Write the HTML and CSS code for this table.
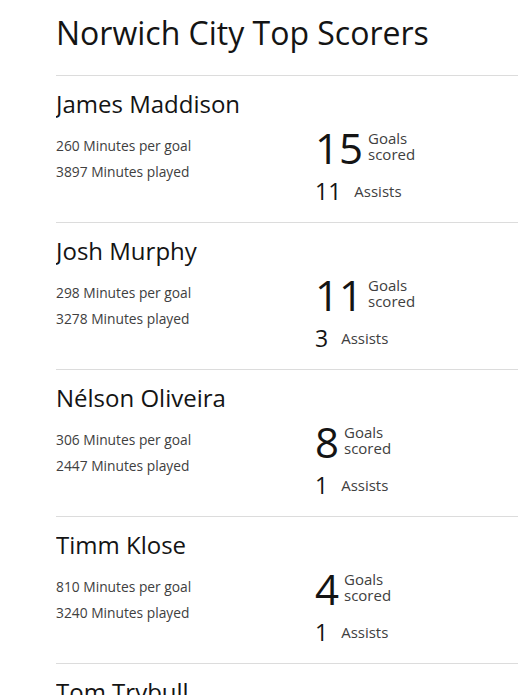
FILE: index.html
```html
<!DOCTYPE html>
<html lang="en">
<head>
    <meta charset="UTF-8">
    <meta name="viewport" content="width=device-width, initial-scale=1.0">
    <title>Norwich City Top Scorers</title>
    <link rel="stylesheet" href="styles.css">
</head>
<body>

<div class="container">
    <h1>Norwich City Top Scorers</h1>

    <div class="player">
        <h2>James Maddison</h2>
        <div class="player-body">
            <div class="minutes">
                <p>260 Minutes per goal</p>
                <p>3897 Minutes played</p>
            </div>
            <div class="totals">
                <div class="goals"><span class="big">15</span><span class="label">Goals<br>scored</span></div>
                <div class="assists"><span class="mid">11</span><span class="label">Assists</span></div>
            </div>
        </div>
    </div>

    <div class="player">
        <h2>Josh Murphy</h2>
        <div class="player-body">
            <div class="minutes">
                <p>298 Minutes per goal</p>
                <p>3278 Minutes played</p>
            </div>
            <div class="totals">
                <div class="goals"><span class="big">11</span><span class="label">Goals<br>scored</span></div>
                <div class="assists"><span class="mid">3</span><span class="label">Assists</span></div>
            </div>
        </div>
    </div>

    <div class="player">
        <h2>Nélson Oliveira</h2>
        <div class="player-body">
            <div class="minutes">
                <p>306 Minutes per goal</p>
                <p>2447 Minutes played</p>
            </div>
            <div class="totals">
                <div class="goals"><span class="big">8</span><span class="label">Goals<br>scored</span></div>
                <div class="assists"><span class="mid">1</span><span class="label">Assists</span></div>
            </div>
        </div>
    </div>

    <div class="player">
        <h2>Timm Klose</h2>
        <div class="player-body">
            <div class="minutes">
                <p>810 Minutes per goal</p>
                <p>3240 Minutes played</p>
            </div>
            <div class="totals">
                <div class="goals"><span class="big">4</span><span class="label">Goals<br>scored</span></div>
                <div class="assists"><span class="mid">1</span><span class="label">Assists</span></div>
            </div>
        </div>
    </div>

    <div class="player">
        <h2>Tom Trybull</h2>
        <div class="player-body">
            <div class="minutes">
                <p>540 Minutes per goal</p>
                <p>2160 Minutes played</p>
            </div>
            <div class="totals">
                <div class="goals"><span class="big">4</span><span class="label">Goals<br>scored</span></div>
                <div class="assists"><span class="mid">2</span><span class="label">Assists</span></div>
            </div>
        </div>
    </div>
</div>

</body>
</html>
```

FILE: styles.css
```css
body {
    font-family: "Open Sans", Arial, sans-serif;
    margin: 0;
    padding: 0 0 0 56px;
    background-color: #fff;
    color: #141414;
}
.container {
    overflow: hidden;
}
h1 {
    font-size: 32px;
    font-weight: 400;
    line-height: 40px;
    margin: 13px 0 22px;
}
.player {
    box-sizing: border-box;
    border-top: 1px solid #dcdcdc;
    height: 147px;
    padding-top: 12px;
}
.player h2 {
    font-size: 24px;
    font-weight: 400;
    line-height: 32px;
    margin: 0 0 9px;
}
.player-body {
    display: grid;
    grid-template-columns: 259px 1fr;
}
.minutes {
    padding-top: 4px;
}
.minutes p {
    font-size: 13.8px;
    color: #404040;
    line-height: 26px;
    margin: 0;
}
.totals {
    margin-top: -4px;
}
.goals,
.assists {
    display: flex;
    align-items: center;
}
.assists {
    margin-top: 5px;
}
.big {
    font-size: 42px;
    line-height: 46px;
    margin-right: 5px;
}
.mid {
    font-size: 23px;
    line-height: 30px;
    margin-right: 13px;
}
.label {
    font-size: 15px;
    line-height: 16px;
    color: #404040;
}
.goals .label {
    margin-bottom: 5px;
}
```
